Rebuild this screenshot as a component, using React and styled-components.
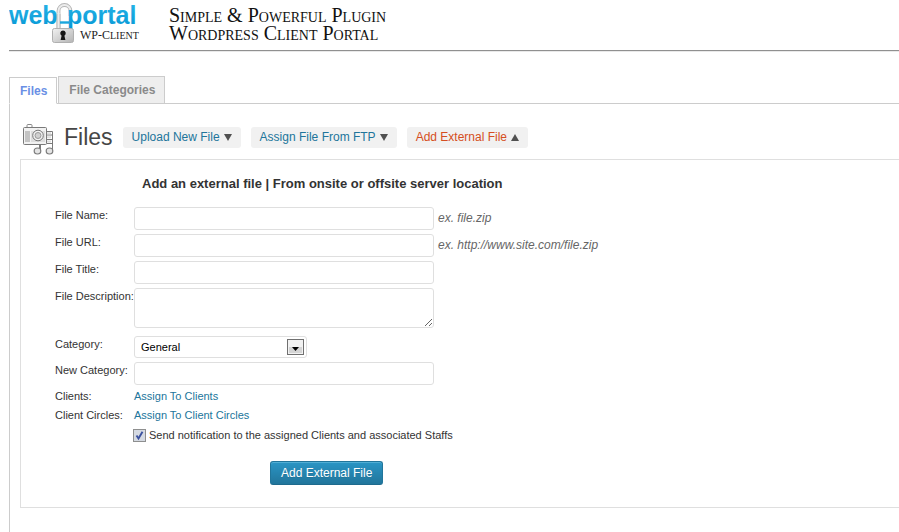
import React from "react";
import styled, { createGlobalStyle } from "styled-components";

const GlobalStyle = createGlobalStyle`
  * { box-sizing: border-box; }
  body {
    margin: 0;
    background: #fff;
    color: #333;
    font-family: "Liberation Sans", Arial, sans-serif;
    font-size: 11px;
    line-height: 15px;
  }
  button, input, select, textarea { font: inherit; color: inherit; }
`;

const Page = styled.div`
  padding-left: 9px;
  overflow: hidden;
`;

const Header = styled.header`
  display: flex;
  gap: 28px;
  height: 52px;
  border-bottom: 1px solid #e9e9e9;
  box-shadow: inset 0 -1px #909090;
`;

const LogoArt = styled.svg`
  display: block;
  flex: none;
  font-family: "Liberation Sans", Arial, sans-serif;
`;

const Tagline = styled.p`
  margin: 0;
  padding-top: 6px;
  color: #111;
  font-family: "Liberation Serif", "Times New Roman", serif;
  font-size: 20px;
  line-height: 18px;
  font-variant: small-caps;
  white-space: nowrap;
`;

const TabBar = styled.nav`
  display: flex;
  align-items: flex-end;
  gap: 1px;
  margin-top: 24px;
  border-bottom: 1px solid #ccc;
`;

const Tab = styled.a`
  height: ${(p) => (p.$active ? 27 : 28)}px;
  margin-bottom: -1px;
  padding: 0 9px 0 10px;
  border: 1px solid #ccc;
  border-bottom-color: ${(p) => (p.$active ? "#fff" : "#ccc")};
  background: ${(p) => (p.$active ? "#fff" : "#eee")};
  color: ${(p) => (p.$active ? "#6a8fe5" : "#8a8a8a")};
  font-size: 12px;
  font-weight: bold;
  line-height: 26px;
  text-decoration: none;
`;

const Content = styled.main`
  min-height: calc(100vh - 104px);
  padding: 17px 0 24px 10px;
  border-left: 1px solid #ccc;
`;

const TitleRow = styled.div`
  display: flex;
  align-items: center;
  gap: 10px;
  height: 38px;
  padding: 0 0 6px 2px;
`;

const Title = styled.h1`
  margin: 0;
  color: #464646;
  font-size: 23px;
  font-weight: normal;
  line-height: 32px;
`;

const Chip = styled.button`
  display: flex;
  align-items: center;
  gap: 4px;
  height: 21px;
  padding: 0 9px;
  border: 0;
  border-radius: 3px;
  background: #f1f1f1;
  color: ${(p) => (p.$open ? "#d54e21" : "#21759b")};
  font-size: 12px;
  line-height: 21px;
  white-space: nowrap;
`;

const Panel = styled.form`
  padding: 16px 0 22px 34px;
  border: 1px solid #dfdfdf;
  border-right: 0;
`;

const PanelTitle = styled.h2`
  margin: 0 0 15px 87px;
  font-size: 13px;
  line-height: 16px;
`;

const Fields = styled.div`
  display: flex;
  flex-direction: column;
  gap: 4px;
`;

const Row = styled.div`
  display: grid;
  grid-template-columns: 79px minmax(0, 1fr);
  align-items: start;
  padding-top: ${(p) => (p.$spaced ? 4 : 0)}px;
`;

const Label = styled.label`
  padding-top: 1px;
  white-space: nowrap;
`;

const Field = styled.div`
  display: flex;
  align-items: center;
  gap: 4px;
`;

const TextInput = styled.input`
  width: 300px;
  height: 23px;
  padding: 3px;
  border: 1px solid #dfdfdf;
  border-radius: 3px;
  background: #fff;
`;

const TextBox = styled.textarea`
  display: block;
  width: 300px;
  height: 40px;
  border: 1px solid #dfdfdf;
  border-radius: 3px;
  background: #fff;
`;

const Hint = styled.em`
  color: #666;
  font-size: 12px;
`;

const SelectWrap = styled.div`
  position: relative;
  width: 173px;
`;

const Select = styled.select`
  appearance: none;
  display: block;
  width: 100%;
  height: 22px;
  padding: 0 24px 0 6px;
  border: 1px solid #dfdfdf;
  border-radius: 3px;
  background: #fff;
  color: #000;
`;

const SelectArrow = styled.svg`
  position: absolute;
  top: 3px;
  right: 3px;
  pointer-events: none;
`;

const Link = styled.a`
  justify-self: start;
  color: #21759b;
  text-decoration: none;
`;

const CheckLabel = styled.label`
  display: flex;
  align-items: center;
  gap: 3px;
  padding-top: 1px;
  margin-left: 78px;
`;

const Check = styled.input`
  appearance: none;
  width: 13px;
  height: 13px;
  margin: 0;
  border: 1px solid #8e8f8f;
  background: #d5dae2;
  &:checked {
    background: #d5dae2 url("data:image/svg+xml,%3Csvg xmlns='http://www.w3.org/2000/svg' viewBox='0 0 11 11'%3E%3Cpath d='M2.5 5.5 4.5 8.5 8.5 1.8' fill='none' stroke='%233b52a0' stroke-width='1.9'/%3E%3C/svg%3E");
  }
`;

const Submit = styled.button`
  display: block;
  height: 24px;
  margin: 18px 0 0 215px;
  padding: 0 10px;
  border: 1px solid #21759b;
  border-bottom-color: #1e6a8d;
  border-radius: 3px;
  background: linear-gradient(#2a95c5, #21759b);
  box-shadow: inset 0 1px 0 rgba(120, 200, 230, 0.5);
  color: #fff;
  font-size: 12px;
  line-height: 22px;
  text-shadow: 0 1px 0 rgba(0, 0, 0, 0.1);
`;

function Logo() {
  return (
    <LogoArt width="132" height="46" viewBox="0 0 132 46" role="img" aria-label="web portal WP-Client">
      <defs>
        <linearGradient id="blue" x1="0" y1="0" x2="0" y2="1">
          <stop offset="0" stopColor="#27b5e8" />
          <stop offset="1" stopColor="#0798d5" />
        </linearGradient>
        <linearGradient id="steel" x1="0" y1="0" x2="1" y2="1">
          <stop offset="0" stopColor="#f2f2f2" />
          <stop offset="1" stopColor="#b4b4b4" />
        </linearGradient>
      </defs>
      <path d="M49.5 30V11a6 6 0 0 1 12 0v5" fill="none" stroke="#b5b5b5" strokeWidth="3.8" />
      <path d="M49.5 30V11a6 6 0 0 1 12 0v5" fill="none" stroke="#ececec" strokeWidth="2" />
      <g fill="url(#blue)" fontSize="25" fontWeight="bold">
        <text x="0" y="24">web</text>
        <text x="58" y="24">portal</text>
      </g>
      <path d="M49.5 29V14" stroke="#b5b5b5" strokeWidth="3.8" />
      <path d="M49.5 29V13" stroke="#ececec" strokeWidth="2" />
      <path d="M51 22.5h9" stroke="#1ba6dd" strokeWidth="2.4" />
      <rect x="43.5" y="28.5" width="21" height="14" rx="2" fill="url(#steel)" stroke="#b0b0b0" />
      <path d="M54 30.5a2.8 2.8 0 0 1 1.4 5.2l1 4.3h-4.8l1-4.3a2.8 2.8 0 0 1 1.4-5.2z" fill="#151515" />
      <text x="71" y="39" fill="#222" fontSize="12" fontFamily="Liberation Serif, serif">
        WP-C<tspan fontSize="10">LIENT</tspan>
      </text>
    </LogoArt>
  );
}

function MediaIcon() {
  return (
    <svg width="32" height="36" viewBox="0 0 32 36" fill="none" aria-hidden="true">
      <path d="M5 8V6.5q0-1 1-1h3q1 0 1 1V8" stroke="#888" />
      <path d="M24 12.5h6.5V32M25 16h5M25 20.5h5M25 24.5h5M18.5 32v-8" stroke="#7a7a7a" />
      <path d="M25 14.3h4M25 18.3h4M25 22.5h4" stroke="#ddd" strokeWidth="2" />
      <rect x="1.5" y="8.5" width="23" height="17" rx="1" fill="#f2f2f2" stroke="#7a7a7a" />
      <rect x="3" y="12" width="5" height="11" fill="#c4c4c4" />
      <rect x="9" y="12" width="14" height="11" fill="#dedede" />
      <circle cx="16" cy="16.5" r="5.3" fill="#f2f2f2" stroke="#777" />
      <circle cx="16" cy="16.5" r="3" fill="#d0d0d0" stroke="#999" />
      <path d="M18.5 32v-6M17.5 29v-3" stroke="#7a7a7a" />
      <ellipse cx="15.5" cy="32" rx="3.3" ry="3" fill="#e4e4e4" stroke="#7a7a7a" strokeWidth="1.2" />
      <ellipse cx="27.5" cy="32" rx="3.3" ry="3" fill="#e4e4e4" stroke="#7a7a7a" strokeWidth="1.2" />
    </svg>
  );
}

function Triangle({ up }) {
  return (
    <svg width="8" height="8" viewBox="0 0 8 8" aria-hidden="true">
      <path d={up ? "M0 8 4 1l4 7z" : "M0 1h8l-4 7z"} fill="#505050" />
    </svg>
  );
}

const actions = [
  { text: "Upload New File" },
  { text: "Assign File From FTP" },
  { text: "Add External File", open: true },
];

export default function App() {
  return (
    <>
      <GlobalStyle />
      <Page>
        <Header>
          <Logo />
          <Tagline>
            Simple &amp; Powerful Plugin
            <br />
            Wordpress Client Portal
          </Tagline>
        </Header>
        <TabBar>
          <Tab href="#files" $active>Files</Tab>
          <Tab href="#categories">File Categories</Tab>
        </TabBar>
        <Content>
          <TitleRow>
            <MediaIcon />
            <Title>Files</Title>
            {actions.map((a) => (
              <Chip key={a.text} type="button" $open={a.open} aria-expanded={!!a.open}>
                {a.text}
                <Triangle up={a.open} />
              </Chip>
            ))}
          </TitleRow>
          <Panel onSubmit={(e) => e.preventDefault()}>
            <PanelTitle>Add an external file | From onsite or offsite server location</PanelTitle>
            <Fields>
              <Row>
                <Label htmlFor="name">File Name:</Label>
                <Field>
                  <TextInput id="name" type="text" />
                  <Hint>ex. file.zip</Hint>
                </Field>
              </Row>
              <Row>
                <Label htmlFor="url">File URL:</Label>
                <Field>
                  <TextInput id="url" type="text" />
                  <Hint>ex. http://www.site.com/file.zip</Hint>
                </Field>
              </Row>
              <Row>
                <Label htmlFor="title">File Title:</Label>
                <TextInput id="title" type="text" />
              </Row>
              <Row>
                <Label htmlFor="description">File Description:</Label>
                <TextBox id="description" />
              </Row>
              <Row $spaced>
                <Label htmlFor="category">Category:</Label>
                <SelectWrap>
                  <Select id="category" defaultValue="General">
                    <option>General</option>
                  </Select>
                  <SelectArrow width="17" height="16" viewBox="0 0 17 16" aria-hidden="true">
                    <rect x=".5" y=".5" width="16" height="15" fill="#f2f2f2" stroke="#707070" />
                    <rect x="2" y="8" width="13" height="6" fill="#d4d4d4" />
                    <path d="M5 8h7l-3.5 4z" fill="#000" />
                  </SelectArrow>
                </SelectWrap>
              </Row>
              <Row>
                <Label htmlFor="new-category">New Category:</Label>
                <TextInput id="new-category" type="text" />
              </Row>
              <Row>
                <span>Clients:</span>
                <Link href="#clients">Assign To Clients</Link>
              </Row>
              <Row>
                <span>Client Circles:</span>
                <Link href="#circles">Assign To Client Circles</Link>
              </Row>
              <CheckLabel>
                <Check type="checkbox" defaultChecked />
                Send notification to the assigned Clients and associated Staffs
              </CheckLabel>
            </Fields>
            <Submit type="submit">Add External File</Submit>
          </Panel>
        </Content>
      </Page>
    </>
  );
}
